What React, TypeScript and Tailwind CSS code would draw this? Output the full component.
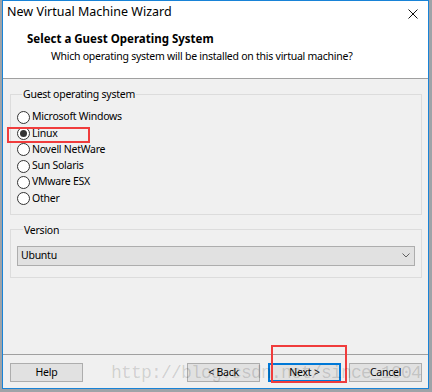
const options = ["Microsoft Windows", "Linux", "Novell NetWare", "Sun Solaris", "VMware ESX", "Other"];

const Radio = ({ checked }: { checked: boolean }) => (
  <span className="w-[13px] h-[13px] rounded-full border border-[#333] bg-white flex items-center justify-center shrink-0">
    {checked && <span className="w-[7px] h-[7px] rounded-full bg-[#333]"></span>}
  </span>
);

const Button = ({ label, primary }: { label: string; primary?: boolean }) => (
  <button
    className={
      primary
        ? "w-[73px] h-[19px] bg-[#e1e1e1] text-[10.5px] tracking-[-0.25px] leading-none text-black flex items-center justify-center border-2 border-[#0078d7]"
        : "w-[73px] h-[19px] bg-[#e1e1e1] text-[10.5px] tracking-[-0.25px] leading-none text-black flex items-center justify-center border border-[#adadad]"
    }
  >
    {label}
  </button>
);

export default function App() {
  return (
    <div className="w-[432px] h-[392px] bg-[#9ea3a8] pl-[2px] pr-[3px] pb-[3px] relative overflow-hidden font-['Noto_Sans','Open_Sans',sans-serif]">
      <div className="w-full h-full border border-[#1883d7] bg-[#f0f0f0] flex flex-col">
        {/* title bar + header */}
        <div className="bg-white h-[77px] shrink-0">
          <div className="h-[30px] flex items-start justify-between pt-[3px] pl-[4px] pr-[10px]">
            <span className="text-[12.5px] leading-[16px] text-black">New Virtual Machine Wizard</span>
            <svg width="10" height="10" viewBox="0 0 10 10" className="mt-[5px]">
              <path d="M0.5 0.5 L9.5 9.5 M9.5 0.5 L0.5 9.5" stroke="#111" strokeWidth="1" />
            </svg>
          </div>
          <div className="pl-[24px] text-[11.5px] leading-[16px] font-bold text-black">Select a Guest Operating System</div>
          <div className="pl-[48px] mt-[1px] text-[10.5px] tracking-[-0.25px] leading-[16px] text-black">Which operating system will be installed on this virtual machine?</div>
        </div>
        <div className="h-px bg-[#a0a0a0] shrink-0"></div>

        {/* body */}
        <div className="flex-1 flex flex-col pl-[7px] pr-[6px] pt-[6px] text-[10.5px] tracking-[-0.25px] text-black">
          <fieldset className="border border-[#dcdcdc] pl-[6px] pt-[6px] pb-[7px]">
            <legend className="leading-[18px] px-[1px] ml-[5px]">Guest operating system</legend>
            <div className="flex flex-col">
              {options.map((o) => (
                <div key={o} className="h-[16.3px] flex items-center gap-[2px]">
                  <Radio checked={o === "Linux"} />
                  <span>{o}</span>
                </div>
              ))}
            </div>
          </fieldset>

          <fieldset className="border border-[#dcdcdc] mt-[6px] px-[6px] pt-[7px] pb-[11px]">
            <legend className="leading-[18px] px-[1px] ml-[6px]">Version</legend>
            <div className="h-[20px] bg-[#e1e1e1] border border-[#adadad] flex items-center justify-between pl-[3px] pr-[4px]">
              <span>Ubuntu</span>
              <svg width="8" height="5" viewBox="0 0 8 5">
                <path d="M0.5 0.5 L4 4 L7.5 0.5" stroke="#606060" fill="none" strokeWidth="1" />
              </svg>
            </div>
          </fieldset>
        </div>

        <div className="h-px bg-[#a0a0a0] shrink-0"></div>
        <div className="h-[33px] shrink-0 flex items-start pt-[8px] pl-[7px] pr-[6px]">
          <Button label="Help" />
          <div className="flex-1"></div>
          <div className="flex gap-[8px]">
            <Button label="< Back" />
            <Button label="Next >" primary />
            <Button label="Cancel" />
          </div>
        </div>
      </div>

      {/* annotations drawn over the screenshot */}
      <div className="absolute left-[7px] top-[127px] w-[83px] h-[16px] border-2 border-[#f03c3c]"></div>
      <div className="absolute left-[271px] top-[345px] w-[76px] h-[38px] border-2 border-[#f03c3c]"></div>
      <div className="absolute left-[111px] top-[363px] text-[18px] leading-[20px] tracking-[-0.8px] text-black/15 whitespace-nowrap pointer-events-none font-['Liberation_Mono',monospace]">
        http://blog.csdn.net/since_1004
      </div>
    </div>
  );
}
